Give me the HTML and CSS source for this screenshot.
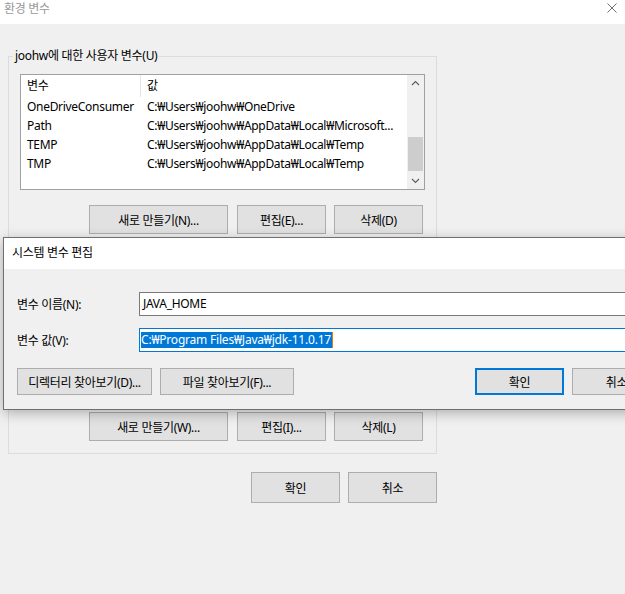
FILE: index.html
```html
<!DOCTYPE html>
<html lang="ko">
<head>
<meta charset="utf-8">
<title>환경 변수</title>
<link rel="stylesheet" href="styles.css">
</head>
<body>
<div class="window">
  <div class="titlebar">
    <span class="title">환경 변수</span>
    <svg class="close" width="10" height="10" viewBox="0 0 10 10"><path d="M0.5 0.5 L9.5 9.5 M9.5 0.5 L0.5 9.5" stroke="#6e6e6e" stroke-width="1" fill="none"/></svg>
  </div>
  <div class="main">
    <fieldset class="group group-user">
      <legend>joohw에 대한 사용자 변수(U)</legend>
      <div class="listbox">
        <div class="list">
          <div class="lrow lhead"><span class="c1">변수</span><span class="c2">값</span></div>
          <div class="lrow"><span class="c1">OneDriveConsumer</span><span class="c2">C:₩Users₩joohw₩OneDrive</span></div>
          <div class="lrow"><span class="c1">Path</span><span class="c2">C:₩Users₩joohw₩AppData₩Local₩Microsoft...</span></div>
          <div class="lrow"><span class="c1">TEMP</span><span class="c2">C:₩Users₩joohw₩AppData₩Local₩Temp</span></div>
          <div class="lrow"><span class="c1">TMP</span><span class="c2">C:₩Users₩joohw₩AppData₩Local₩Temp</span></div>
        </div>
        <div class="vscroll">
          <svg class="arrow" width="17" height="17" viewBox="0 0 17 17"><path d="M5 10 L8.5 6.5 L12 10" stroke="#606060" stroke-width="1.2" fill="none"/></svg>
          <div class="track"><div class="thumb"></div></div>
          <svg class="arrow" width="17" height="17" viewBox="0 0 17 17"><path d="M5 7 L8.5 10.5 L12 7" stroke="#606060" stroke-width="1.2" fill="none"/></svg>
        </div>
      </div>
      <div class="btnrow">
        <button class="btn btn-wide">새로 만들기(N)...</button>
        <button class="btn">편집(E)...</button>
        <button class="btn">삭제(D)</button>
      </div>
    </fieldset>
    <div class="group group-sys">
      <div class="listbox listbox-sys"></div>
      <div class="btnrow">
        <button class="btn btn-wide">새로 만들기(W)...</button>
        <button class="btn">편집(I)...</button>
        <button class="btn">삭제(L)</button>
      </div>
    </div>
    <div class="footer">
      <button class="btn btn-foot">확인</button>
      <button class="btn btn-foot">취소</button>
    </div>
  </div>

  <div class="dialog">
    <div class="dlg-title">시스템 변수 편집</div>
    <div class="dlg-body">
      <div class="field">
        <label class="flabel">변수 이름(N):</label>
        <div class="input">JAVA_HOME</div>
      </div>
      <div class="field">
        <label class="flabel">변수 값(V):</label>
        <div class="input input-focus"><span class="sel">C:₩Program Files₩Java₩jdk-11.0.17</span><span class="caret"></span></div>
      </div>
      <div class="dlg-btns">
        <button class="btn dbtn dbtn-dir">디렉터리 찾아보기(D)...</button>
        <button class="btn dbtn dbtn-file">파일 찾아보기(F)...</button>
        <button class="btn dbtn dbtn-ok">확인</button>
        <button class="btn dbtn">취소</button>
      </div>
    </div>
  </div>
</div>
</body>
</html>
```

FILE: styles.css
```css
html, body {
  margin: 0;
  padding: 0;
}
body {
  width: 625px;
  height: 594px;
  overflow: hidden;
  background: #f0f0f0;
  font-family: "Noto Sans", "Noto Sans CJK KR", sans-serif;
  font-size: 12px;
  letter-spacing: -0.3px;
  color: #000;
}
.window {
  position: relative;
  width: 625px;
  height: 594px;
  background: #f0f0f0;
}
.titlebar {
  height: 24px;
  background: #fff;
  display: flex;
  justify-content: space-between;
  align-items: flex-start;
}
.title {
  color: #9a9a9a;
  line-height: 16px;
  padding: 1px 0 0 4px;
}
.close {
  margin: 3px 8px 0 0;
}
.main {
  padding: 0 0 0 8px;
}
.group {
  box-sizing: border-box;
  width: 429px;
  margin: 0;
  padding: 0 0 10px 0;
  border: 1px solid #dcdcdc;
  min-inline-size: 0;
}
.group legend {
  margin-left: 4px;
  padding: 0 2px;
  line-height: 16px;
}
.group-user {
  margin-top: 24px;
}
.group-sys {
  margin-top: 6px;
  padding-bottom: 12px;
}
.listbox {
  box-sizing: border-box;
  width: 405px;
  height: 116px;
  margin: 10px 0 0 11px;
  border: 1px solid #a0a0a0;
  background: #fff;
  display: flex;
}
.listbox-sys {
  height: 135px;
}
.list {
  flex: 1;
}
.lrow {
  display: flex;
  height: 19px;
  line-height: 19px;
  white-space: nowrap;
}
.lhead {
  height: 22px;
  line-height: 22px;
}
.c1 {
  width: 120px;
  padding-left: 6px;
  box-sizing: border-box;
}
.c2 {
  padding-left: 6px;
}
.lhead .c1 {
  border-right: 1px solid #e5e5e5;
}
.vscroll {
  width: 17px;
  background: #f0f0f0;
  display: flex;
  flex-direction: column;
}
.arrow {
  display: block;
  flex: none;
}
.track {
  flex: 1;
  display: flex;
  flex-direction: column;
  justify-content: flex-end;
}
.thumb {
  height: 34px;
  margin: 0 1px 1px 1px;
  background: #cdcdcd;
}
.btnrow {
  display: flex;
  justify-content: flex-end;
  gap: 8px;
  margin: 15px 13px 0 0;
}
.btn {
  box-sizing: border-box;
  height: 29px;
  width: 89px;
  padding: 0;
  background: #e1e1e1;
  border: 1px solid #adadad;
  font-family: "Noto Sans", "Noto Sans CJK KR", sans-serif;
  font-size: 12px;
  letter-spacing: -0.3px;
  color: #000;
}
.btn-wide {
  width: 139px;
  margin-right: 1px;
}
.footer {
  width: 429px;
  display: flex;
  justify-content: flex-end;
  gap: 8px;
  margin-top: 18px;
}
.btn-foot {
  height: 31px;
}

/* edit dialog overlapping the window */
.dialog {
  position: absolute;
  left: 3px;
  top: 237px;
  width: 672px;
  height: 173px;
  box-sizing: border-box;
  border: 1px solid #6f6f6f;
  background: #f0f0f0;
  box-shadow: 0 3px 12px rgba(0, 0, 0, 0.28);
}
.dlg-title {
  height: 31px;
  line-height: 29px;
  background: #fff;
  padding-left: 8px;
}
.dlg-body {
  padding: 23px 13px 0 13px;
}
.field {
  display: flex;
  align-items: center;
  margin-bottom: 12px;
}
.flabel {
  width: 122px;
  flex: none;
}
.input {
  box-sizing: border-box;
  flex: 1;
  height: 24px;
  line-height: 22px;
  border: 1px solid #7a7a7a;
  background: #fff;
  padding-left: 3px;
  white-space: nowrap;
  display: flex;
  align-items: center;
}
.input-focus {
  border-color: #0078d7;
  padding-left: 1px;
}
.sel {
  background: #0078d7;
  color: #fff;
  line-height: 16px;
  padding-right: 1px;
  letter-spacing: -0.2px;
}
.caret {
  width: 1px;
  height: 16px;
  background: #e07b1a;
}
.dlg-btns {
  display: flex;
  gap: 8px;
  margin-top: 16px;
}
.dbtn {
  height: 27px;
}
.dbtn-dir {
  width: 135px;
}
.dbtn-file {
  width: 134px;
}
.dbtn-ok {
  margin-left: auto;
  border: 2px solid #0078d7;
}
```
